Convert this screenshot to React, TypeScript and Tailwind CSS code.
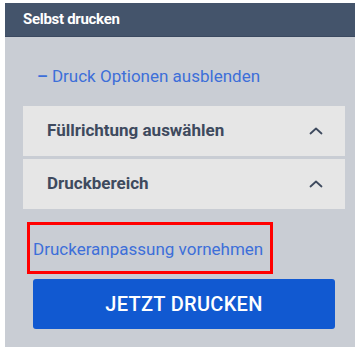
import React from "react";

function ChevronUp() {
  return (
    <svg width="16" height="10" viewBox="0 0 16 10" fill="none">
      <path d="M2.5 7.5 L8 2.5 L13.5 7.5" stroke="#3e4a5e" strokeWidth="1.8" strokeLinecap="round" strokeLinejoin="round" />
    </svg>
  );
}

function Section({ title }: { title: string }) {
  return (
    <div className="flex h-[50px] items-center justify-between bg-[#e6e6e6] pl-[24px] pr-[21px]">
      <span className="text-[17px] font-bold text-[#3e4a5e]">{title}</span>
      <ChevronUp />
    </div>
  );
}

export default function App() {
  return (
    <div
      className="h-[352px] w-[358px] bg-white pl-[5px] pt-[3px]"
      style={{ fontFamily: "Roboto, 'Liberation Sans', sans-serif" }}
    >
      <div className="w-[350px]">
        <div className="flex h-[34px] items-center border-b border-[#3b4960] bg-[#44546b] px-[18px]">
          <span className="text-[15px] font-bold tracking-[-0.3px] text-white">Selbst drucken</span>
        </div>
        <div className="flex h-[310px] flex-col bg-[#c9cdd4]">
          <a className="ml-[32px] mt-[27px] text-[17px] leading-[24px] text-[#3d6fd9]">
            <span className="font-bold">–</span> Druck Optionen ausblenden
          </a>
          <div className="ml-[18px] mt-[18px] flex w-[322px] flex-col gap-[3px]">
            <Section title="Füllrichtung auswählen" />
            <Section title="Druckbereich" />
          </div>
          <div className="relative ml-[28px] mt-[28px] h-[24px]">
            <a className="text-[17px] leading-[24px] text-[#3d6fd9]">Druckeranpassung vornehmen</a>
            <div className="absolute left-[-6px] top-[-15px] h-[52px] w-[246px] border-[3px] border-[#ff0000]" />
          </div>
          <button className="ml-[28px] mt-[18px] flex h-[50px] w-[302px] items-center justify-center rounded-[3px] bg-[#1159d1] text-[20px] font-medium tracking-[0.3px] text-white">
            JETZT DRUCKEN
          </button>
        </div>
      </div>
    </div>
  );
}
